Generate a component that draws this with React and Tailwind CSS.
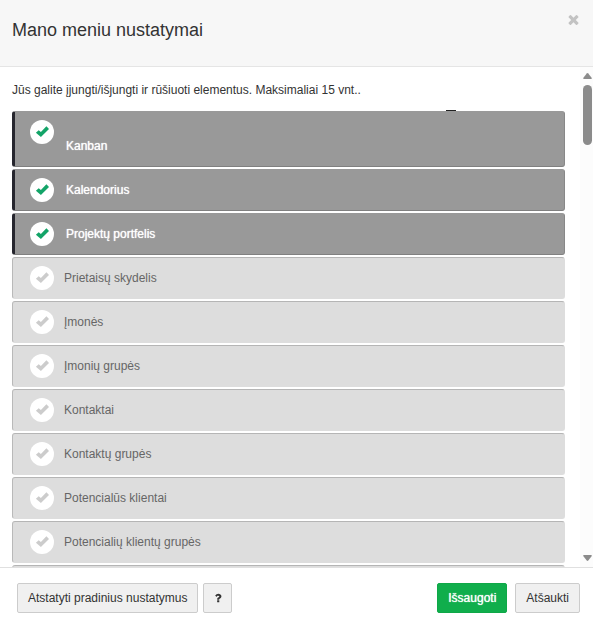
import { useState } from "react";
import clsx from "clsx";

const initialItems = [
    { id: "kanban", label: "Kanban", enabled: true, tall: true },
    { id: "calendar", label: "Kalendorius", enabled: true },
    { id: "portfolio", label: "Projektų portfelis", enabled: true },
    { id: "dashboard", label: "Prietaisų skydelis", enabled: false },
    { id: "companies", label: "Įmonės", enabled: false },
    { id: "company-groups", label: "Įmonių grupės", enabled: false },
    { id: "contacts", label: "Kontaktai", enabled: false },
    { id: "contact-groups", label: "Kontaktų grupės", enabled: false },
    { id: "leads", label: "Potencialūs klientai", enabled: false },
    { id: "lead-groups", label: "Potencialių klientų grupės", enabled: false },
    { id: "empty", label: "", enabled: false },
];

function CheckIcon({ className }) {
    return (
        <svg viewBox="-1 -1 14 12" fill="currentColor" aria-hidden="true" className={className}>
            <path d="M-.1 6.8 2.7 4.3 4.9 5.9 10.4.3 13 3 4.9 11Z" />
        </svg>
    );
}

function TimesIcon({ className }) {
    return (
        <svg viewBox="0 0 1792 1792" fill="currentColor" aria-hidden="true" className={className}>
            <path d="M1490 1322q0 40-28 68l-136 136q-28 28-68 28t-68-28l-294-294-294 294q-28 28-68 28t-68-28l-136-136q-28-28-28-68t28-68l294-294-294-294q-28-28-28-68t28-68l136-136q28-28 68-28t68 28l294 294 294-294q28-28 68-28t68 28l136 136q28 28 28 68t-28 68l-294 294 294 294q28 28 28 68z" />
        </svg>
    );
}

function QuestionIcon({ className }) {
    return (
        <svg viewBox="0 0 1792 1792" fill="currentColor" aria-hidden="true" className={className}>
            <path d="M1088 1256v240q0 16-12 28t-28 12h-240q-16 0-28-12t-12-28v-240q0-16 12-28t28-12h240q16 0 28 12t12 28zm316-600q0 54-15.5 101t-35 76.5-55 59.5-57.5 43.5-61 35.5q-41 23-68.5 65t-27.5 67q0 17-12 32.5t-28 15.5h-240q-15 0-25.5-18.5t-10.5-37.5v-45q0-83 65-156.5t143-108.5q59-27 84-56t25-76q0-42-46.5-74t-107.5-32q-65 0-108 29-35 25-107 115-13 16-31 16-12 0-25-8l-164-125q-13-10-15.5-25t5.5-28q160-266 464-266 80 0 161 31t146 83 106 127.5 41 158.5z" />
        </svg>
    );
}

function MenuItem({ item, onToggle }) {
    return (
        <li>
            <label
                className={clsx(
                    "flex cursor-pointer rounded-[3px] border py-2",
                    item.tall ? "h-14 items-start" : "h-[42px] items-center",
                    item.enabled
                        ? "gap-3 border-l-[3px] border-t-[#999] border-r-[#888] border-b-[#808080] border-l-[#26262e] bg-[#999] pl-[15px] text-white [text-shadow:0_0_1px_#fff]"
                        : "gap-[10px] border-t-[#b5b5b5] border-r-[#ddd] border-b-[#ddd] border-l-[#b9b9b9] bg-[#ddd] pl-[17px] text-[#666]"
                )}
            >
                <span className="grid size-6 shrink-0 place-items-center">
                    <input
                        type="checkbox"
                        checked={item.enabled}
                        onChange={() => onToggle(item.id)}
                        className="col-start-1 row-start-1 size-6 cursor-pointer appearance-none rounded-full bg-white"
                    />
                    <CheckIcon
                        className={clsx(
                            "pointer-events-none col-start-1 row-start-1 mb-[2px] h-3 w-[14px]",
                            item.enabled ? "text-[#13a468]" : "text-[#ccc]"
                        )}
                    />
                </span>
                <span className={clsx("leading-5", item.tall && "pt-4")}>{item.label}</span>
            </label>
        </li>
    );
}

function Scrollbar() {
    return (
        <div aria-hidden="true" className="flex w-[13px] shrink-0 flex-col items-center bg-[#fcfcfc] pt-[6px] pb-[6px] pl-[2px] text-[#8b8b8b]">
            <svg viewBox="0 0 9 6" fill="currentColor" className="h-[6px] w-[9px]">
                <path d="M3.7.5Q4.5-.4 5.3.5L8.8 4.9Q9 6 8 6H1Q0 6 .2 4.9z" />
            </svg>
            <div className="mt-[6px] h-[60px] w-[9px] rounded-full bg-[#8b8b8b]" />
            <svg viewBox="0 0 9 6" fill="currentColor" className="mt-auto h-[6px] w-[9px]">
                <path d="M3.7 5.5Q4.5 6.4 5.3 5.5L8.8 1.1Q9 0 8 0H1Q0 0 .2 1.1z" />
            </svg>
        </div>
    );
}

const buttonClass =
    "flex h-[30px] cursor-pointer items-center justify-center rounded-[2px] border px-[10px] leading-5";

export function MenuSettings() {
    const [items, setItems] = useState(initialItems);

    const toggleItem = (id) => {
        setItems((prev) =>
            prev.map((item) => (item.id === id ? { ...item, enabled: !item.enabled } : item))
        );
    };

    return (
        <section className="bg-white font-['Liberation_Sans',Arial,sans-serif] text-xs text-[#333]">
            <header className="flex h-[67px] items-start justify-between border-b border-[#e5e5e5] bg-[#f7f7f7] pt-3 pr-3 pl-3">
                <h1 className="pt-1 text-lg leading-7">Mano meniu nustatymai</h1>
                <button type="button" aria-label="Uždaryti" className="cursor-pointer text-[#c3c3c3]">
                    <TimesIcon className="size-[15px]" />
                </button>
            </header>

            <div className="flex h-[500px]">
                <div className="min-w-0 flex-1 overflow-y-auto pt-[13px] pr-[15px] pl-3 [scrollbar-width:none]">
                    <p className="mb-[11px] leading-5">
                        Jūs galite įjungti/išjungti ir rūšiuoti elementus. Maksimaliai 15 vnt..
                    </p>
                    <div className="relative">
                        <span className="absolute -top-px right-[109px] h-px w-[10px] bg-[#222]" />
                        <ul className="flex flex-col gap-[2px]">
                            {items.map((item) => (
                                <MenuItem key={item.id} item={item} onToggle={toggleItem} />
                            ))}
                        </ul>
                    </div>
                </div>
                <Scrollbar />
            </div>

            <footer className="flex items-center justify-between border-t border-[#e0e0e0] pt-[15px] pr-[13px] pb-[10px] pl-[17px]">
                <div className="flex gap-[5px]">
                    <button type="button" className={clsx(buttonClass, "border-[#ccc] bg-[#f0f0f0]")}>
                        Atstatyti pradinius nustatymus
                    </button>
                    <button type="button" aria-label="Pagalba" className={clsx(buttonClass, "w-[29px] border-[#ccc] bg-[#f0f0f0]")}>
                        <QuestionIcon className="size-3 shrink-0" />
                    </button>
                </div>
                <div className="flex gap-2">
                    <button type="button" className={clsx(buttonClass, "border-[#0fa848] bg-[#10ae4c] text-white [text-shadow:0_0_1px_#fff]")}>
                        Išsaugoti
                    </button>
                    <button type="button" className={clsx(buttonClass, "border-[#ccc] bg-[#f0f0f0]")}>
                        Atšaukti
                    </button>
                </div>
            </footer>
        </section>
    );
}

export default MenuSettings;
